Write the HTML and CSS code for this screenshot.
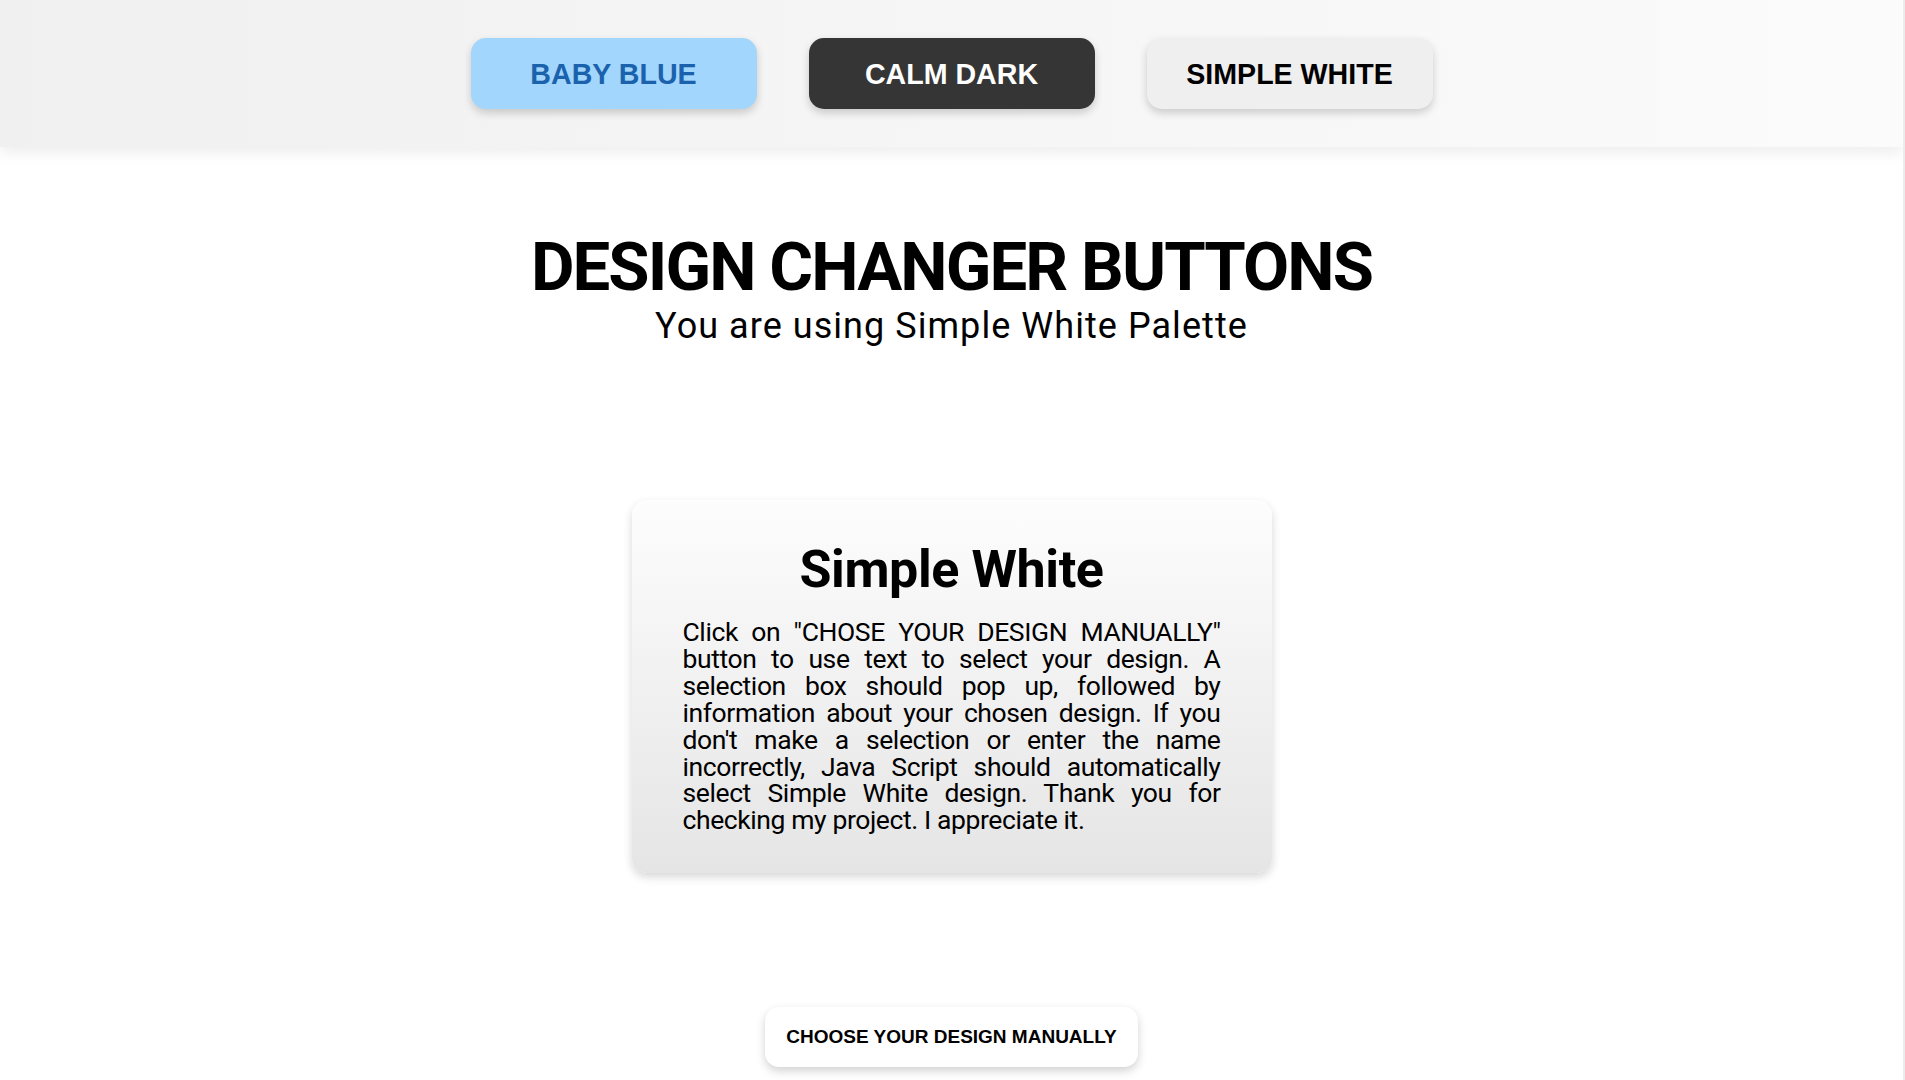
FILE: index.html
```html
<!DOCTYPE html>
<html lang="en">
<head>
<meta charset="utf-8">
<title>Design Changer Buttons</title>
<link rel="stylesheet" href="styles.css">
</head>
<body>
<div class="page">
  <header class="topbar">
    <button class="theme-btn theme-blue">BABY BLUE</button>
    <button class="theme-btn theme-dark">CALM DARK</button>
    <button class="theme-btn theme-white">SIMPLE WHITE</button>
  </header>
  <main class="content">
    <h1 class="title">DESIGN CHANGER BUTTONS</h1>
    <p class="subtitle">You are using Simple White Palette</p>
    <section class="card">
      <h2 class="card-title">Simple White</h2>
      <p class="card-text">Click on "CHOSE YOUR DESIGN MANUALLY" button to use text to select your design. A selection box should pop up, followed by information about your chosen design. If you don't make a selection or enter the name incorrectly, Java Script should automatically select Simple White design. Thank you for checking my project. I appreciate it.</p>
    </section>
    <button class="manual-btn">CHOOSE YOUR DESIGN MANUALLY</button>
  </main>
</div>
</body>
</html>
```
FILE: styles.css
```css
html {
  background: #ececec;
}
body {
  margin: 0;
  font-family: Roboto, "Liberation Sans", sans-serif;
  color: #000;
}
.page {
  width: calc(100% - 2px);
  min-height: 1080px;
  background: #fff;
  overflow: hidden;
}
.topbar {
  height: 147px;
  box-sizing: border-box;
  display: flex;
  justify-content: center;
  align-items: center;
  gap: 52px;
  background: linear-gradient(to right, #f0f0f0, #fbfbfb);
  box-shadow: 0 6px 14px rgba(0, 0, 0, 0.07);
  position: relative;
  z-index: 1;
}
.theme-btn {
  width: 286px;
  height: 71px;
  border: none;
  border-radius: 15px;
  font-family: "Liberation Sans", Arial, sans-serif;
  font-weight: 700;
  font-size: 28.6px;
  box-shadow: 0 4px 8px rgba(0, 0, 0, 0.18);
  cursor: pointer;
  padding: 2px 0 0;
}
.theme-blue {
  background: #a2d6fd;
  color: #1b62ad;
}
.theme-dark {
  background: #353535;
  color: #fff;
}
.theme-white {
  background: #efefef;
  color: #000;
}
.content {
  display: flex;
  flex-direction: column;
  align-items: center;
  padding-top: 81px;
}
.title {
  margin: 0;
  font-size: 67px;
  font-weight: 700;
  line-height: normal;
  letter-spacing: -1.9px;
}
.subtitle {
  margin: 0;
  font-size: 36px;
  font-weight: 400;
  line-height: 40px;
  letter-spacing: 1.05px;
}
.card {
  margin-top: 154px;
  width: 640px;
  box-sizing: border-box;
  padding: 39px 51px 39px;
  border-radius: 15px;
  background: linear-gradient(to bottom, #fdfdfd, #e5e5e5);
  box-shadow: 0 4px 10px rgba(0, 0, 0, 0.16);
}
.card-title {
  margin: 0 0 19px;
  text-align: center;
  font-size: 52px;
  font-weight: 700;
  line-height: normal;
  letter-spacing: -0.4px;
}
.card-text {
  margin: 0;
  font-size: 26.5px;
  line-height: 26.9px;
  text-align: justify;
  font-weight: 400;
  letter-spacing: -0.4px;
}
.manual-btn {
  margin-top: 134px;
  width: 373px;
  height: 60px;
  border: none;
  border-radius: 14px;
  background: #fff;
  color: #000;
  font-family: "Liberation Sans", Arial, sans-serif;
  font-weight: 700;
  font-size: 19px;
  box-shadow: 0 4px 10px rgba(0, 0, 0, 0.18);
  padding: 0;
  cursor: pointer;
}
```
